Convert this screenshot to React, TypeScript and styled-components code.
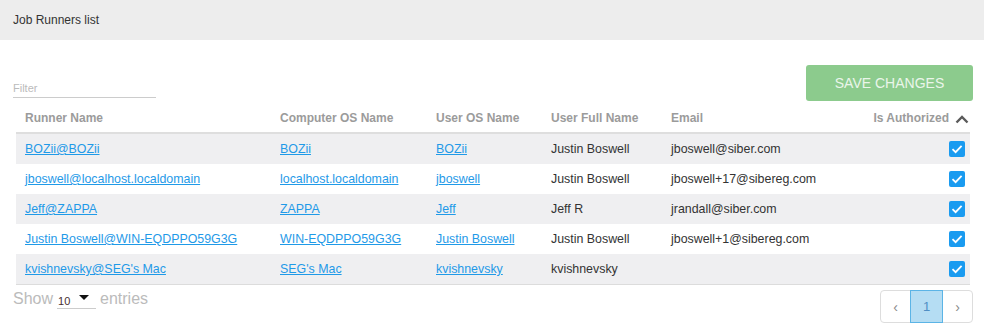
import React, { useState } from 'react';
import styled, { createGlobalStyle } from 'styled-components';

type Runner = {
  runner: string;
  computer: string;
  userOs: string;
  fullName: string;
  email: string;
  authorized: boolean;
};

const runners: Runner[] = [
  { runner: 'BOZii@BOZii', computer: 'BOZii', userOs: 'BOZii', fullName: 'Justin Boswell', email: 'jboswell@siber.com', authorized: true },
  { runner: 'jboswell@localhost.localdomain', computer: 'localhost.localdomain', userOs: 'jboswell', fullName: 'Justin Boswell', email: 'jboswell+17@sibereg.com', authorized: true },
  { runner: 'Jeff@ZAPPA', computer: 'ZAPPA', userOs: 'Jeff', fullName: 'Jeff R', email: 'jrandall@siber.com', authorized: true },
  { runner: 'Justin Boswell@WIN-EQDPPO59G3G', computer: 'WIN-EQDPPO59G3G', userOs: 'Justin Boswell', fullName: 'Justin Boswell', email: 'jboswell+1@sibereg.com', authorized: true },
  { runner: "kvishnevsky@SEG's Mac", computer: "SEG's Mac", userOs: 'kvishnevsky', fullName: 'kvishnevsky', email: '', authorized: true },
];

const App = () => {
  const [rows, setRows] = useState(runners);

  const toggle = (index: number) =>
    setRows(pre =>
      pre.map((row, i) => (i === index ? { ...row, authorized: !row.authorized } : row))
    );

  return (
    <Page>
      <GlobalStyle />
      <TitleBar>Job Runners list</TitleBar>
      <Toolbar>
        <FilterInput placeholder="Filter" />
        <SaveButton>SAVE CHANGES</SaveButton>
      </Toolbar>
      <Table>
        <colgroup>
          <col style={{ width: 255 }} />
          <col style={{ width: 156 }} />
          <col style={{ width: 115 }} />
          <col style={{ width: 120 }} />
          <col />
          <col style={{ width: 130 }} />
        </colgroup>
        <thead>
          <tr>
            <Th>Runner Name</Th>
            <Th>Computer OS Name</Th>
            <Th>User OS Name</Th>
            <Th>User Full Name</Th>
            <Th>Email</Th>
            <Th $right>
              Is Authorized
              <SortIcon viewBox="0 0 14 9">
                <path d="M1.5 7.5 7 2l5.5 5.5" fill="none" stroke="#5a5a5a" strokeWidth="2.4" />
              </SortIcon>
            </Th>
          </tr>
        </thead>
        <tbody>
          {rows.map((row, i) => (
            <Tr key={row.runner} $striped={i % 2 === 0}>
              <Td><Link href="#">{row.runner}</Link></Td>
              <Td><Link href="#">{row.computer}</Link></Td>
              <Td><Link href="#">{row.userOs}</Link></Td>
              <Td>{row.fullName}</Td>
              <Td>{row.email}</Td>
              <Td $right>
                <Check $on={row.authorized} onClick={() => toggle(i)}>
                  {row.authorized && (
                    <svg viewBox="0 0 16 16" width="16" height="16">
                      <path d="M3.5 8.2 6.6 11.2 12.6 4.8" fill="none" stroke="#fff" strokeWidth="1.8" />
                    </svg>
                  )}
                </Check>
              </Td>
            </Tr>
          ))}
        </tbody>
      </Table>
      <Footer>
        <ShowText>
          Show
          <PageSize>
            10
            <Caret />
          </PageSize>
          entries
        </ShowText>
        <Pager>
          <PageButton>‹</PageButton>
          <PageButton $active>1</PageButton>
          <PageButton>›</PageButton>
        </Pager>
      </Footer>
    </Page>
  );
};

export default App;

const GlobalStyle = createGlobalStyle`
  body {
    margin: 0;
    background: #ffffff;
    font-family: "Liberation Sans", Arial, sans-serif;
  }
`;

const Page = styled.div`
  width: 984px;
  height: 329px;
  display: flex;
  flex-direction: column;
`;

const TitleBar = styled.div`
  height: 40px;
  display: flex;
  align-items: center;
  padding-left: 13px;
  background: #ededed;
  color: #333333;
  font-size: 12px;
`;

const Toolbar = styled.div`
  display: flex;
  justify-content: space-between;
  align-items: flex-end;
  padding: 25px 11px 0 13px;
`;

const FilterInput = styled.input`
  width: 143px;
  height: 18px;
  margin-bottom: 3px;
  padding: 0;
  border: none;
  border-bottom: 1px solid #cccccc;
  outline: none;
  font-family: inherit;
  font-size: 11px;
  color: #333;

  &::placeholder {
    color: #bbbbbb;
  }
`;

const SaveButton = styled.button`
  width: 167px;
  height: 36px;
  border: none;
  border-radius: 3px;
  background: #8ccb8d;
  color: #eaf5ea;
  font-family: inherit;
  font-size: 14px;
`;

const Table = styled.table`
  width: 954px;
  margin: 3px 0 0 16px;
  border-collapse: collapse;
  table-layout: fixed;
  border-bottom: 1px solid #dcdcdc;
`;

const Th = styled.th<{ $right?: boolean }>`
  height: 28px;
  padding: 0 ${props => (props.$right ? '1px' : '9px')} 0 9px;
  text-align: ${props => (props.$right ? 'right' : 'left')};
  color: #9b9b9b;
  font-size: 12px;
  font-weight: 700;
  border-bottom: 2px solid #dedede;
  white-space: nowrap;
`;

const SortIcon = styled.svg`
  width: 14px;
  height: 9px;
  margin-left: 6px;
  vertical-align: -2px;
`;

const Tr = styled.tr<{ $striped: boolean }>`
  background: ${props => (props.$striped ? '#efeff1' : '#ffffff')};
`;

const Td = styled.td<{ $right?: boolean }>`
  height: 30px;
  padding: ${props => (props.$right ? '0 5px 0 0' : '0 9px')};
  text-align: ${props => (props.$right ? 'right' : 'left')};
  color: #333333;
  font-size: 12.4px;
  white-space: nowrap;
  vertical-align: middle;
`;

const Link = styled.a`
  color: #1f9ae8;
  text-decoration: underline;
`;

const Check = styled.span<{ $on: boolean }>`
  display: block;
  width: 16px;
  height: 16px;
  margin: -1px 0 0 auto;
  border-radius: 2px;
  background: ${props => (props.$on ? '#1a9bf0' : '#ffffff')};
  border: ${props => (props.$on ? 'none' : '1px solid #aaa')};
  cursor: pointer;

  svg {
    display: block;
  }
`;

const Footer = styled.div`
  display: flex;
  justify-content: space-between;
  align-items: flex-start;
  padding: 4px 11px 0 13px;
`;

const ShowText = styled.div`
  display: flex;
  align-items: center;
  gap: 4px;
  color: #bbbbbb;
  font-size: 16px;
`;

const PageSize = styled.span`
  display: inline-flex;
  align-items: center;
  justify-content: space-between;
  width: 39px;
  height: 20px;
  padding: 4px 0 0 1px;
  box-sizing: border-box;
  border-bottom: 1px solid #cccccc;
  color: #4a2f2f;
  font-size: 11px;
`;

const Caret = styled.span`
  width: 0;
  height: 0;
  margin-right: 7px;
  margin-top: -6px;
  border-left: 5px solid transparent;
  border-right: 5px solid transparent;
  border-top: 5px solid #111;
`;

const Pager = styled.div`
  display: flex;
  height: 33px;
  margin-top: 1px;
  border: 1px solid #dddddd;
  border-radius: 4px;
  box-sizing: border-box;
`;

const PageButton = styled.span<{ $active?: boolean }>`
  display: flex;
  align-items: center;
  justify-content: center;
  width: ${props => (props.$active ? '33px' : '29px')};
  margin: ${props => (props.$active ? '-1px 0' : '0')};
  box-sizing: border-box;
  background: ${props => (props.$active ? '#b5ddf3' : 'transparent')};
  border: ${props => (props.$active ? '1px solid #5bb4e6' : 'none')};
  color: ${props => (props.$active ? '#4f8fc4' : '#8a8a8a')};
  font-size: ${props => (props.$active ? '13px' : '14px')};
`;
